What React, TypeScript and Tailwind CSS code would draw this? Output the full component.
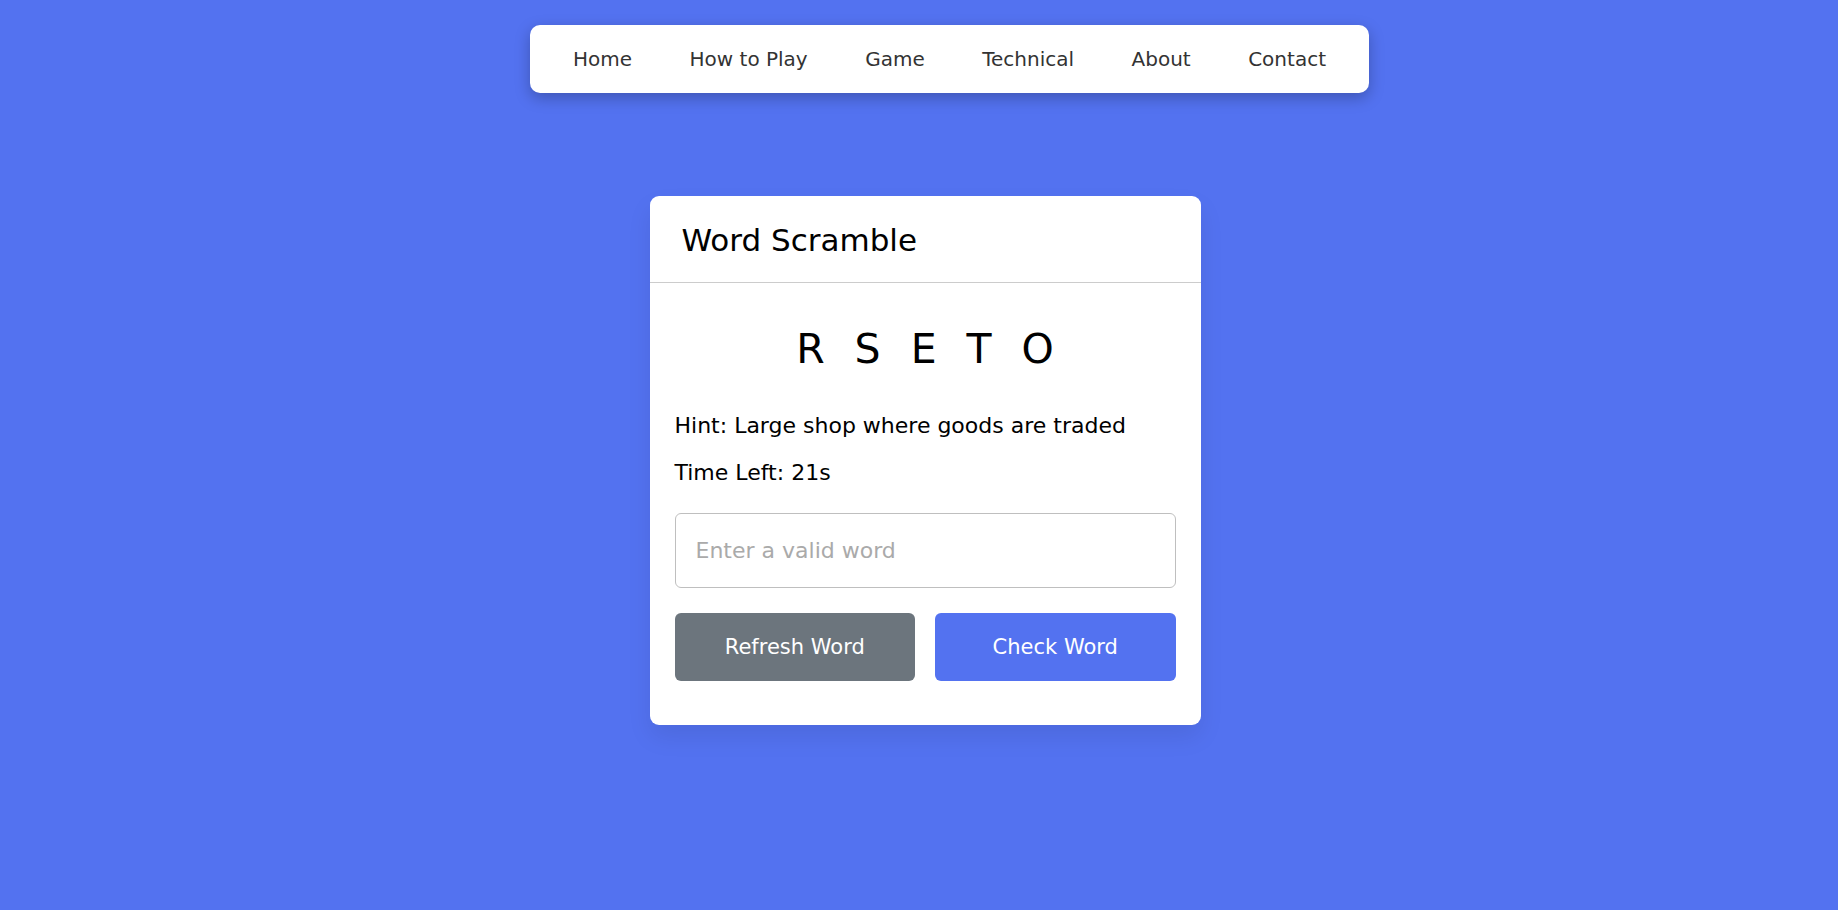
const NAV_LINKS = ["Home", "How to Play", "Game", "Technical", "About", "Contact"];

export default function App() {
  return (
    <div className="min-h-screen bg-[#5372F0] font-['DejaVu_Sans',sans-serif] flex flex-col items-center pl-[12px]">
      {/* Nav */}
      <div className="w-full flex justify-center pl-[49px] pt-[25px]">
        <nav className="w-[839px] h-[68px] bg-white rounded-[10px] shadow-[0_5px_15px_rgba(0,0,0,0.25)] flex items-center justify-between px-[43px]">
          {NAV_LINKS.map((link) => (
            <a key={link} href="#" className="text-[20px] text-[#333] leading-none">
              {link}
            </a>
          ))}
        </nav>
      </div>

      {/* Card */}
      <div className="mt-[103px] w-[551px] bg-white rounded-[9px] shadow-[0_12px_25px_rgba(0,0,0,0.08)]">
        <h2 className="h-[87px] flex items-center pt-[2px] px-[32px] text-[31px] text-black border-b border-[#ccc]">
          Word Scramble
        </h2>
        <div className="mx-[25px] mt-[31px] mb-[44px]">
          <p className="h-[62px] flex items-center justify-center pt-[9px] text-[41px] tracking-[30px] mr-[-30px] text-black">
            RSETO
          </p>
          <div className="mt-[33px] mb-[23px] flex flex-col gap-[12.5px] text-[22px] text-black">
            <p className="leading-[34px]">Hint: Large shop where goods are traded</p>
            <p className="leading-[34px]">
              Time Left: <span>21</span>s
            </p>
          </div>
          <input
            type="text"
            placeholder="Enter a valid word"
            className="w-full h-[75px] px-[20px] text-[22px] rounded-[6px] border border-[#bfbfbf] outline-none placeholder:text-[#aaa]"
          />
          <div className="mt-[25px] flex justify-between">
            <button className="w-[calc(50%-10px)] h-[68px] pt-[3px] rounded-[6px] bg-[#6C757D] text-white text-[21px]">
              Refresh Word
            </button>
            <button className="w-[calc(50%-10px)] h-[68px] pt-[3px] rounded-[6px] bg-[#5372F0] text-white text-[21px]">
              Check Word
            </button>
          </div>
        </div>
      </div>
    </div>
  );
}
